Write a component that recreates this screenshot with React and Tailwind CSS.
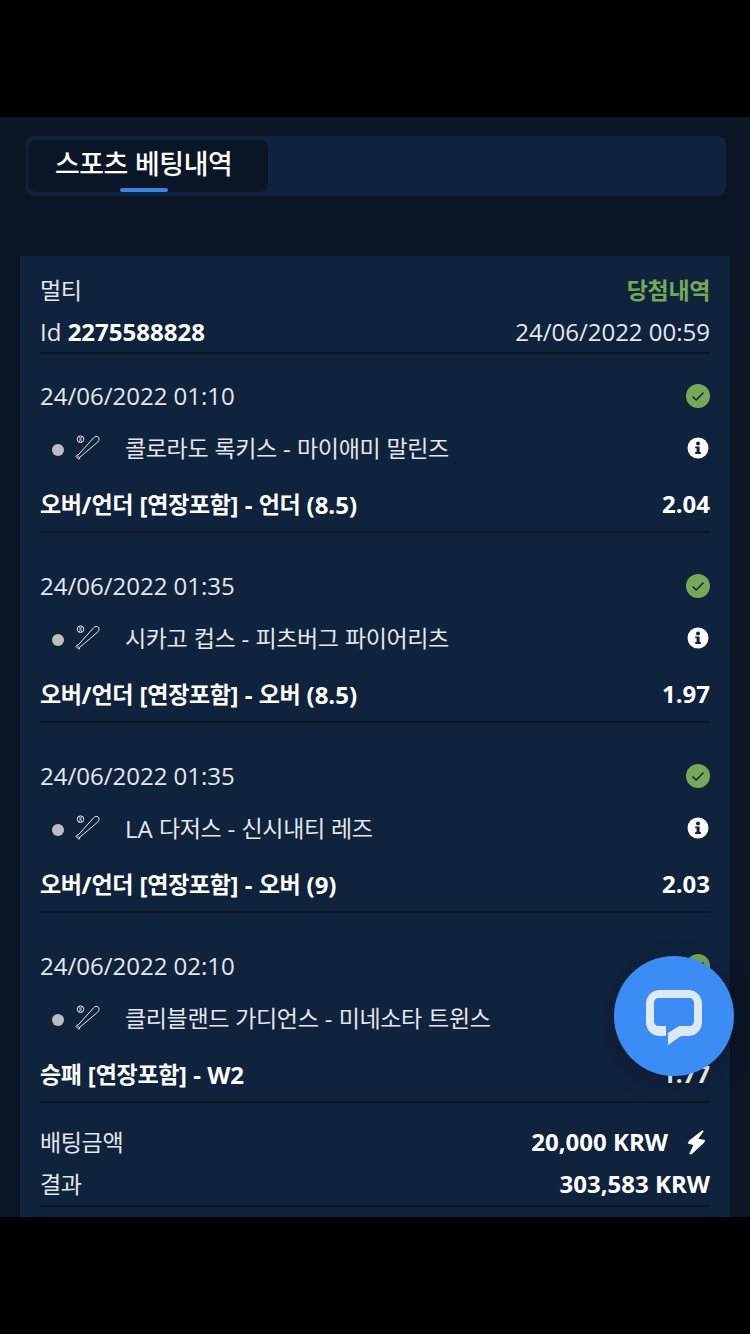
const FONT = "font-['Open_Sans','Noto_Sans_CJK_KR',sans-serif]";

function T({ children }) {
  return String(children)
    .split(/([\uAC00-\uD7A3]+)/)
    .map((part, i) =>
      /[\uAC00-\uD7A3]/.test(part) ? (
        <span key={i} className="align-[1px] text-[0.96em] tracking-[-0.017em]">{part}</span>
      ) : (
        part
      )
    );
}

function Check() {
  return (
    <svg width="24" height="24" viewBox="0 0 24 24" className="block">
      <circle cx="12" cy="12" r="12" fill="#74a957" />
      <path d="M6.5 12.5 L10.2 16 L17.5 8.5" fill="none" stroke="#10233d" strokeWidth="1.4" />
    </svg>
  );
}

function Info() {
  return (
    <svg width="22" height="22" viewBox="0 0 22 22" className="block">
      <circle cx="11" cy="11" r="10.5" fill="#fff" />
      <circle cx="11" cy="6.4" r="2" fill="#10233d" />
      <path d="M8.2 9.4 H12.6 V15 H13.9 V16.9 H8.2 V15 H9.6 V11.3 H8.2 Z" fill="#10233d" />
    </svg>
  );
}

function Bat() {
  return (
    <svg width="28" height="28" viewBox="0 0 28 28" className="block" fill="none" stroke="#e8e8e8" strokeWidth="1">
      <path d="M3 22.5 L5.8 25.3 L7 24 L6.6 23.4 L24.6 8.2 C26.6 6 26.2 3.8 25.2 3 C24 2 22 2.2 20.4 4 L5.2 21 L4.4 20.8 Z" />
      <path d="M4.2 21.6 L6.4 23.8" />
      <circle cx="7.5" cy="5.2" r="3.3" />
      <path d="M6.4 2.5 C7.3 4 7.3 6.4 6.4 8 M8.6 2.5 C7.7 4 7.7 6.4 8.6 8" strokeWidth="0.8" />
    </svg>
  );
}

function Bolt() {
  return (
    <svg width="19" height="25" viewBox="0 0 22 26" preserveAspectRatio="none" className="block">
      <path d="M17.5 0.5 L2.5 11 L0.8 14 L7.5 15.5 L2.5 25 L5 25.5 L20 13 L21 10.5 L13 9 L19.5 1 Z" fill="#fff" />
    </svg>
  );
}

function Chat() {
  return (
    <svg width="56" height="56" viewBox="0 0 56 56" className="block">
      <path
        d="M20 46 H14 C6 46 0 40 0 32 V14 C0 6 6 0 14 0 H42 C50 0 56 6 56 14 V32 C56 40 50 46 42 46 H35 L22 55 V43 L33 36 H43 C46 36 48 34 48 31 V13 C48 10 46 8 43 8 H13 C10 8 8 10 8 13 V31 C8 34 10 36 13 36 H20 Z"
        fill="#dfe9f3"
      />
    </svg>
  );
}

function Bet({ date, teams, market, odds }) {
  return (
    <div className="mb-[11px] flex flex-col border-b-2 border-[#0a1626] pt-[22px] pb-[7px]">
      <div className="flex h-[40px] items-center justify-between">
        <span className="text-[#e4e7ec]">{date}</span>
        <Check />
      </div>
      <div className="mt-[10px] flex h-[44px] items-center justify-between">
        <div className="flex items-center">
          <span className="mt-[4px] ml-[12px] h-[12px] w-[12px] rounded-full bg-[#bdbdbd]" />
          <span className="ml-[9px]"><Bat /></span>
          <span className="ml-[24px] text-[#e4e7ec]"><T>{teams}</T></span>
        </div>
        <span className="mr-[1px]"><Info /></span>
      </div>
      <div className="mt-[14px] flex h-[40px] items-center justify-between font-bold">
        <span><T>{market}</T></span>
        <span>{odds}</span>
      </div>
    </div>
  );
}

const bets = [
  { date: "24/06/2022 01:10", teams: "콜로라도 록키스 - 마이애미 말린즈", market: "오버/언더 [연장포함] - 언더 (8.5)", odds: "2.04" },
  { date: "24/06/2022 01:35", teams: "시카고 컵스 - 피츠버그 파이어리츠", market: "오버/언더 [연장포함] - 오버 (8.5)", odds: "1.97" },
  { date: "24/06/2022 01:35", teams: "LA 다저스 - 신시내티 레즈", market: "오버/언더 [연장포함] - 오버 (9)", odds: "2.03" },
  { date: "24/06/2022 02:10", teams: "클리블랜드 가디언스 - 미네소타 트윈스", market: "승패 [연장포함] - W2", odds: "1.77" },
];

export default function App() {
  return (
    <div className={`relative flex h-[1334px] w-[750px] flex-col overflow-hidden bg-black text-[24px] leading-[32px] text-white ${FONT}`}>
      <div className="mt-[117px] h-[1100px] overflow-hidden bg-[#0a1626]">
        <div className="mt-[19px] mr-[24px] ml-[26px] flex h-[60px] items-center rounded-[8px] bg-[#10233d] px-[2px]">
          <div className="relative flex h-[52px] w-[240px] items-center rounded-[8px] bg-[#0a1626] pl-[27px] text-[28px] font-medium">
            <span className="-mt-[4px]"><T>스포츠 베팅내역</T></span>
            <span className="absolute bottom-0 left-[92px] h-[4px] w-[48px] rounded-[2px] bg-[#3b82e6]" />
          </div>
        </div>
        <div className="mx-[20px] mt-[60px] bg-[#10233d] px-[20px] pt-[14px] pb-[20px]">
          <div className="border-b-2 border-[#0a1626]">
            <div className="flex h-[40px] items-center justify-between">
              <span className="text-[#e4e7ec]"><T>멀티</T></span>
              <span className="font-bold text-[#74a957]"><T>당첨내역</T></span>
            </div>
            <div className="mt-[2px] flex h-[40px] items-center justify-between">
              <span className="text-[#e4e7ec]">Id <b className="font-bold text-white">2275588828</b></span>
              <span className="text-[#e4e7ec]">24/06/2022 00:59</span>
            </div>
          </div>
          {bets.map((b, i) => <Bet key={i} {...b} />)}
          <div className="border-b-2 border-[#0a1626] pt-[7px]">
            <div className="flex h-[42px] items-center justify-between">
              <span className="text-[#e4e7ec]"><T>배팅금액</T></span>
              <span className="flex items-center font-bold">20,000 KRW<span className="ml-[19px] mr-[4px]"><Bolt /></span></span>
            </div>
            <div className="flex h-[42px] items-center justify-between">
              <span className="text-[#e4e7ec]"><T>결과</T></span>
              <span className="font-bold">303,583 KRW</span>
            </div>
          </div>
        </div>
      </div>
      <div className="absolute left-[614px] top-[956px] flex h-[120px] w-[120px] items-center justify-center rounded-full bg-[#3c8cf5] pt-[3px] shadow-[0_6px_24px_rgba(0,0,0,0.25)]">
        <Chat />
      </div>
    </div>
  );
}
